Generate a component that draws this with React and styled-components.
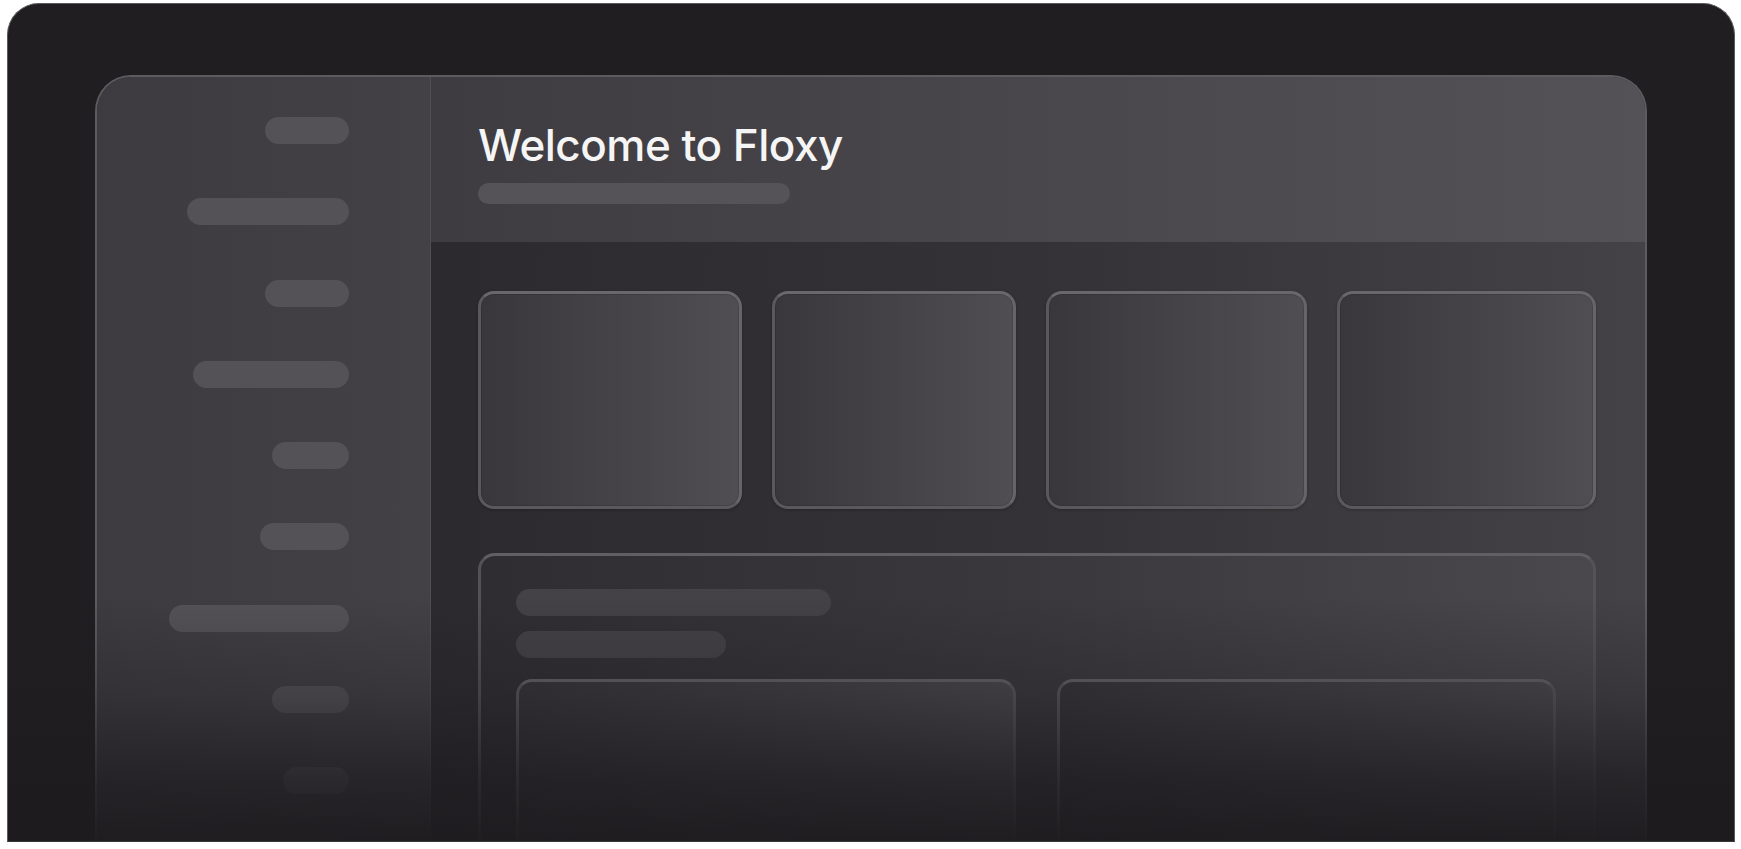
import React from "react";
import styled, { createGlobalStyle } from "styled-components";

const Global = createGlobalStyle`
  html, body { margin: 0; padding: 0; background: #ffffff; }
  body { font-family: "Inter", "Liberation Sans", sans-serif; }
  * { box-sizing: border-box; }
`;

const Page = styled.div`
  width: 1741px;
  height: 849px;
  padding: 3px 6px 0 7px;
  background: #ffffff;
`;

const Frame = styled.div`
  position: relative;
  height: 839px;
  background: #201e21;
  border: 1.5px solid #5a595c;
  border-bottom-color: #3a393c;
  border-radius: 32px 32px 0 0;
  padding: 71px 87px 0;
  overflow: hidden;
`;

const Fade = styled.div`
  position: absolute;
  left: 0;
  right: 0;
  bottom: 0;
  height: 245px;
  pointer-events: none;
  background: linear-gradient(
    to bottom,
    rgba(29, 27, 30, 0) 0%,
    rgba(29, 27, 30, 0.3) 40%,
    rgba(29, 27, 30, 0.75) 75%,
    rgba(29, 27, 30, 0.95) 100%
  );
`;

const App = styled.div`
  height: 820px;
  display: grid;
  grid-template-columns: 334px 1fr;
  border: 2.5px solid #5d5b5f;
  border-bottom: none;
  border-radius: 36px 36px 0 0;
  overflow: hidden;
`;

const Sidebar = styled.aside`
  background: linear-gradient(to right, #3d3b3f, #434145);
  border-right: 1px solid #504e52;
  padding: 40px 81px 0 0;
  display: flex;
  flex-direction: column;
  align-items: flex-end;
  gap: 54.3px;
`;

const NavPill = styled.div`
  width: ${(p) => p.$w}px;
  height: 27px;
  border-radius: 14px;
  background: #545256;
  flex-shrink: 0;
`;

const Main = styled.main`
  display: flex;
  flex-direction: column;
  background: linear-gradient(to right, #2c2a2e 0%, #343236 50%, #444246 100%);
`;

const Header = styled.header`
  height: 165px;
  flex-shrink: 0;
  padding: 42px 0 0 47px;
  background: linear-gradient(to right, #3e3c40, #545256);
  display: flex;
  flex-direction: column;
  gap: 12px;
`;

const Title = styled.h1`
  margin: 0;
  font-family: "Inter", "Liberation Sans", sans-serif;
  font-weight: 500;
  font-size: 44px;
  line-height: 52px;
  letter-spacing: -0.5px;
  color: #f5f5f6;
`;

const SubPill = styled.div`
  width: 312px;
  height: 21px;
  border-radius: 11px;
  background: #555357;
`;

const Content = styled.div`
  padding: 49px 49px 0 47px;
  display: flex;
  flex-direction: column;
  gap: 44px;
`;

const CardRow = styled.div`
  display: grid;
  grid-template-columns: 264fr 244fr 261fr 259fr;
  column-gap: 30px;
`;

const Card = styled.div`
  height: 218px;
  border-radius: 16px;
  border: 3px solid #5a585c;
  border-top-color: #69676b;
  border-right-color: #666468;
  background: linear-gradient(to right, #39373b, #504e52);
  box-shadow: inset 0 0 0 1px rgba(0, 0, 0, 0.12), 0 1px 3px rgba(0, 0, 0, 0.25);
`;

const Panel = styled.section`
  border-radius: 17px;
  border: 3px solid #545256;
  border-top-color: #625f64;
  background: linear-gradient(to right, #2f2d31, #3a383c 50%, #4a484c);
  padding: 33px 37px 0 35px;
  height: 340px;
  display: flex;
  flex-direction: column;
`;

const PanelPill = styled.div`
  width: ${(p) => p.$w}px;
  height: 27px;
  border-radius: 14px;
  background: #444246;
  margin-bottom: ${(p) => p.$mb}px;
`;

const SubGrid = styled.div`
  display: grid;
  grid-template-columns: 1fr 1fr;
  column-gap: 41px;
  flex: 1;
`;

const SubPanel = styled.div`
  border-radius: 16px 16px 0 0;
  border: 3px solid #5a585c;
  border-top-color: #666468;
  border-bottom: none;
  background: linear-gradient(to right, #363438, #4b494d);
`;

const navWidths = [84, 162, 84, 156, 77, 89, 180, 77, 66];

export default function Root() {
  return (
    <>
      <Global />
      <Page>
        <Frame>
          <App>
            <Sidebar>
              {navWidths.map((w, i) => (
                <NavPill key={i} $w={w} />
              ))}
            </Sidebar>
            <Main>
              <Header>
                <Title>Welcome to Floxy</Title>
                <SubPill />
              </Header>
              <Content>
                <CardRow>
                  <Card />
                  <Card />
                  <Card />
                  <Card />
                </CardRow>
                <Panel>
                  <PanelPill $w={315} $mb={15} />
                  <PanelPill $w={210} $mb={21} />
                  <SubGrid>
                    <SubPanel />
                    <SubPanel />
                  </SubGrid>
                </Panel>
              </Content>
            </Main>
          </App>
          <Fade />
        </Frame>
      </Page>
    </>
  );
}
